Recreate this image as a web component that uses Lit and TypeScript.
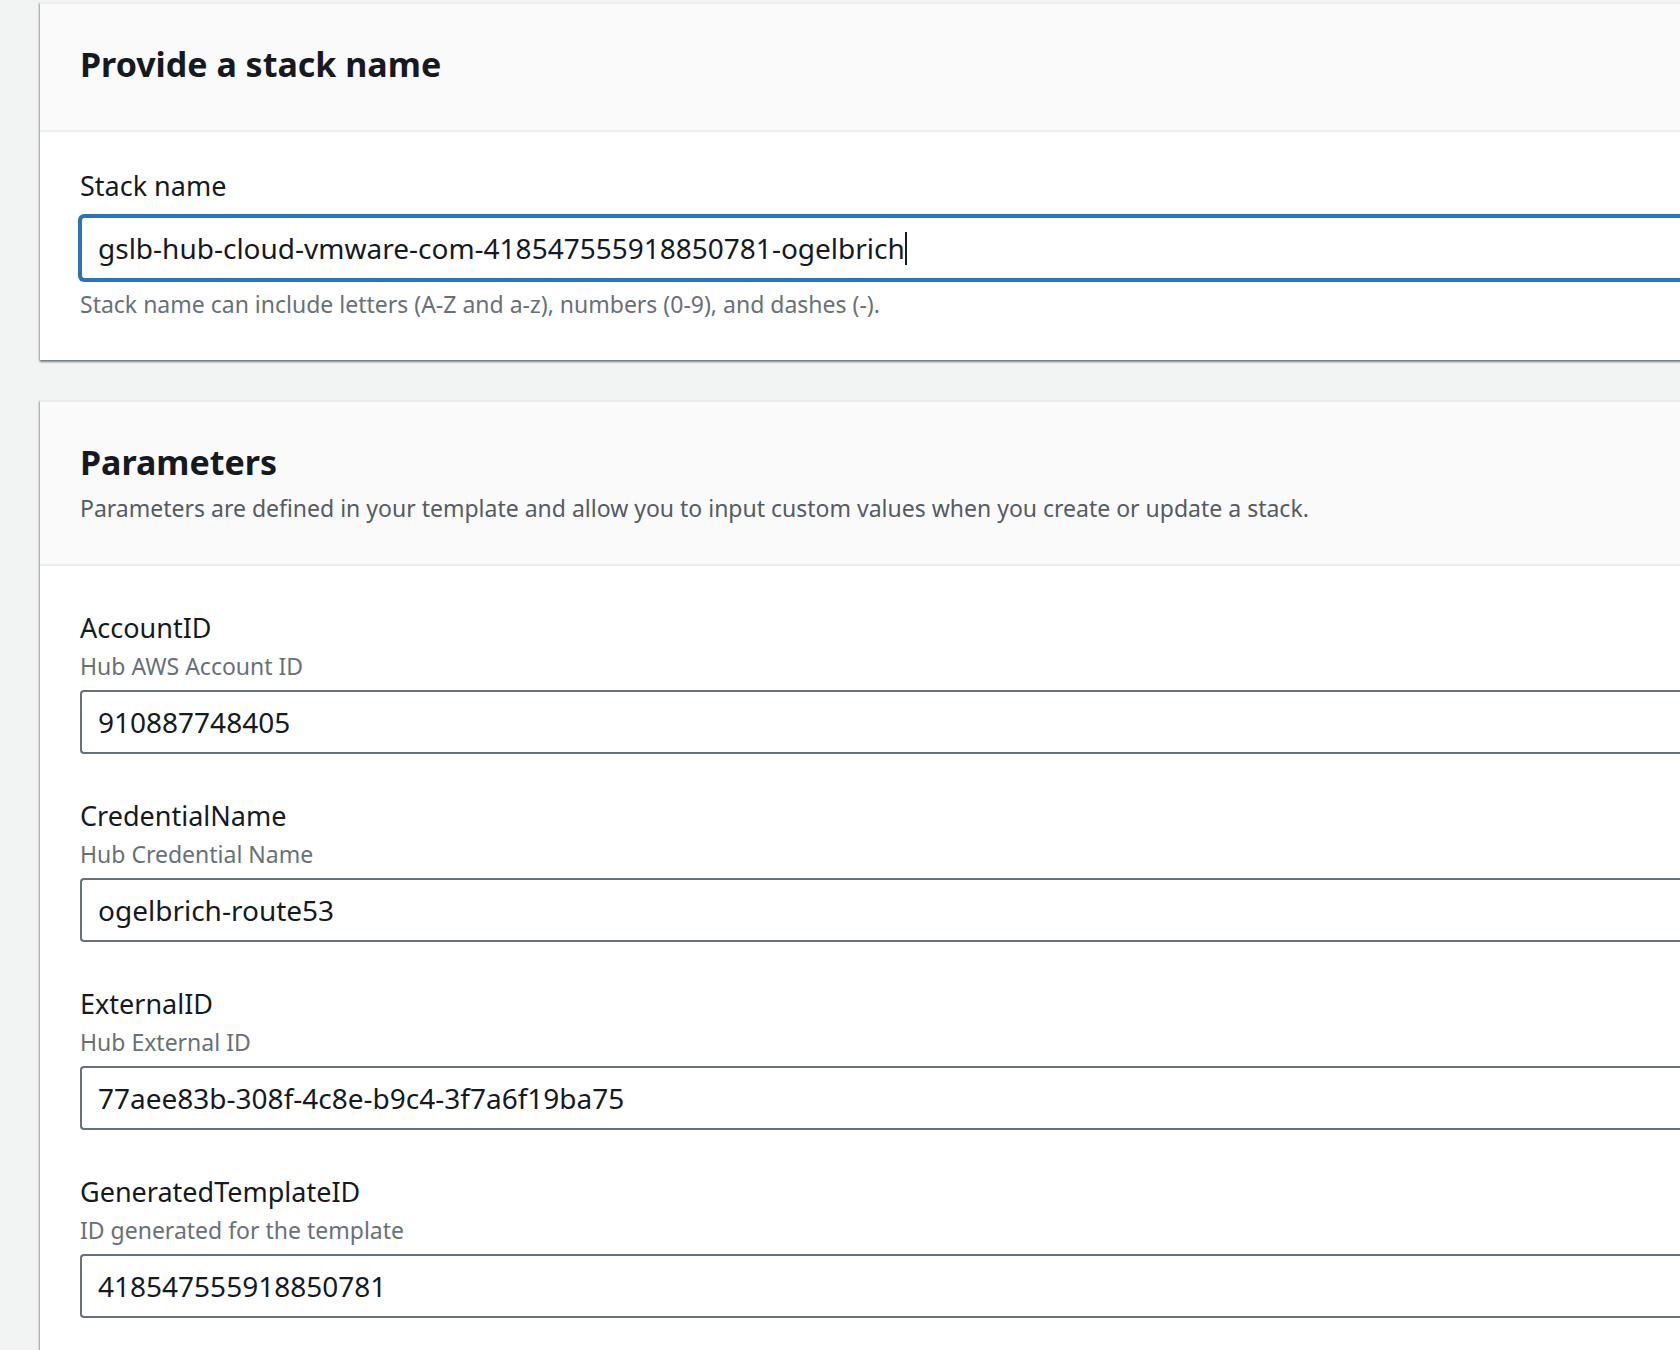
import { LitElement, html, css, nothing } from "lit";
import { customElement, property } from "lit/decorators.js";

interface Parameter {
  name: string;
  hint: string;
  value: string;
}

const parameters: Parameter[] = [
  { name: "AccountID", hint: "Hub AWS Account ID", value: "910887748405" },
  { name: "CredentialName", hint: "Hub Credential Name", value: "ogelbrich-route53" },
  { name: "ExternalID", hint: "Hub External ID", value: "77aee83b-308f-4c8e-b9c4-3f7a6f19ba75" },
  { name: "GeneratedTemplateID", hint: "ID generated for the template", value: "418547555918850781" },
];

/** Card with a tinted header; it runs on past the right edge of the window. */
@customElement("stack-panel")
class StackPanel extends LitElement {
  @property() heading = "";
  @property() description = "";

  static styles = css`
    :host {
      display: block;
      margin-right: -8px;
      background: #fff;
      border-top: 2px solid #eaeded;
      box-shadow: 0 2px 2px 0 rgba(0, 28, 36, 0.45), -1px 1px 2px 0 rgba(0, 28, 36, 0.25);
      clip-path: inset(0 0 -8px -8px);
    }
    .header {
      padding: 31px 40px 37px;
      background: #fafafa;
      border-bottom: 2px solid #eaeded;
    }
    .heading {
      margin: 0;
      font-size: 34px;
      line-height: 58px;
      font-weight: 700;
      color: #16191f;
    }
    .description {
      margin: 0 0 2px;
      font-size: 23px;
      line-height: 34px;
      color: #545b64;
    }
  `;

  render() {
    return html`
      <div class="header">
        <h2 class="heading">${this.heading}</h2>
        ${this.description ? html`<p class="description">${this.description}</p>` : nothing}
      </div>
      <slot></slot>
    `;
  }
}

@customElement("app-root")
class AppRoot extends LitElement {
  static styles = css`
    :host {
      display: block;
      min-height: 100vh;
      overflow: hidden;
      background: #f2f3f3;
      font-family: "Noto Sans", "Open Sans", sans-serif;
      color: #16191f;
    }
    .page {
      display: flex;
      flex-direction: column;
      gap: 40px;
      padding: 2px 0 0 40px;
    }
    .fields {
      display: flex;
      flex-direction: column;
      gap: 42px;
      padding: 42px 0 42px 40px;
    }
    .name-field {
      padding: 34px 0 38px 40px;
    }
    .field {
      display: flex;
      flex-direction: column;
    }
    .label {
      font-size: 27px;
      line-height: 40px;
    }
    .hint {
      font-size: 23px;
      line-height: 36px;
      color: #687078;
    }
    .below {
      margin-top: 6px;
    }
    .box {
      display: flex;
      align-items: center;
      box-sizing: border-box;
      height: 64px;
      margin-top: 6px;
      padding-left: 16px;
      border: 2px solid #687078;
      border-right: 0;
      border-radius: 4px 0 0 4px;
      background: #fff;
    }
    .active {
      margin-top: 10px;
      border-color: #2e73b8;
      box-shadow: 0 0 0 2px #2e73b8;
    }
    .input {
      flex: 1;
      min-width: 0;
      height: 60px;
      padding: 0;
      border: 0;
      outline: 0;
      background: transparent;
      font: inherit;
      font-size: 28px;
      color: inherit;
    }
    .hug {
      flex: none;
      field-sizing: content;
      caret-color: transparent;
    }
    .caret {
      width: 2px;
      height: 33px;
      background: #16191f;
    }
  `;

  render() {
    return html`
      <main class="page">
        <stack-panel heading="Provide a stack name">
          <div class="field name-field">
            <label class="label" for="stack-name">Stack name</label>
            <div class="box active">
              <input
                class="input hug"
                id="stack-name"
                type="text"
                spellcheck="false"
                aria-describedby="stack-name-help"
                .value=${"gslb-hub-cloud-vmware-com-418547555918850781-ogelbrich"}
              /><span class="caret"></span>
            </div>
            <span class="hint below" id="stack-name-help"
              >Stack name can include letters (A-Z and a-z), numbers (0-9), and dashes (-).</span
            >
          </div>
        </stack-panel>
        <stack-panel
          heading="Parameters"
          description="Parameters are defined in your template and allow you to input custom values when you create or update a stack."
        >
          <div class="fields">
            ${parameters.map(
              (p) => html`
                <div class="field">
                  <label class="label" for=${p.name}>${p.name}</label>
                  <span class="hint" id=${`${p.name}-hint`}>${p.hint}</span>
                  <div class="box">
                    <input
                      class="input"
                      id=${p.name}
                      type="text"
                      spellcheck="false"
                      aria-describedby=${`${p.name}-hint`}
                      .value=${p.value}
                    />
                  </div>
                </div>
              `
            )}
          </div>
        </stack-panel>
      </main>
    `;
  }
}
